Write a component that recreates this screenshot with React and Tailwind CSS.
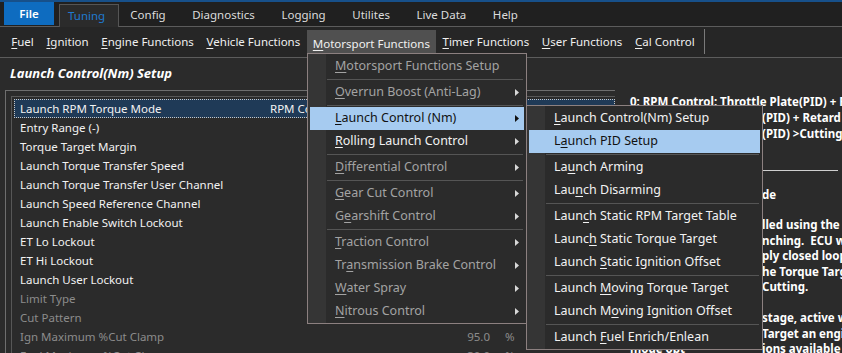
import React from 'react'

const tabs = ['Config', 'Diagnostics', 'Logging', 'Utilites', 'Live Data', 'Help']

const menus = [
  { t: 'Fuel', u: 0 },
  { t: 'Ignition', u: 0 },
  { t: 'Engine Functions', u: 0 },
  { t: 'Vehicle Functions', u: 0 },
  { t: 'Motorsport Functions', u: 0, open: true },
  { t: 'Timer Functions', u: 0 },
  { t: 'User Functions', u: 0 },
  { t: 'Cal Control', u: 0 },
]

const sportItems = [
  { t: 'Motorsport Functions Setup', u: 0, dim: true },
  'sep',
  { t: 'Overrun Boost (Anti-Lag)', u: 0, dim: true, arrow: true },
  'sep',
  { t: 'Launch Control (Nm)', u: 0, active: true, arrow: true },
  { t: 'Rolling Launch Control', u: 0, arrow: true },
  'sep',
  { t: 'Differential Control', u: 0, dim: true, arrow: true },
  'sep',
  { t: 'Gear Cut Control', u: 0, dim: true, arrow: true },
  { t: 'Gearshift Control', u: 1, dim: true, arrow: true },
  'sep',
  { t: 'Traction Control', u: 0, dim: true, arrow: true },
  { t: 'Transmission Brake Control', u: 2, dim: true, arrow: true },
  { t: 'Water Spray', u: 0, dim: true, arrow: true },
  { t: 'Nitrous Control', u: 0, dim: true, arrow: true },
]

const launchItems = [
  { t: 'Launch Control(Nm) Setup', u: 0 },
  { t: 'Launch PID Setup', u: 1, active: true },
  'sep',
  { t: 'Launch Arming', u: 2 },
  { t: 'Launch Disarming', u: 3 },
  'sep',
  { t: 'Launch Static RPM Target Table', u: 4 },
  { t: 'Launch Static Torque Target', u: 5 },
  { t: 'Launch Static Ignition Offset', u: 7 },
  'sep',
  { t: 'Launch Moving Torque Target', u: 7 },
  { t: 'Launch Moving Ignition Offset', u: 8 },
  'sep',
  { t: 'Launch Fuel Enrich/Enlean', u: 7 },
]

const rows = [
  { name: 'Launch RPM Torque Mode', value: 'RPM Control', selected: true },
  { name: 'Entry Range (-)' },
  { name: 'Torque Target Margin' },
  { name: 'Launch Torque Transfer Speed' },
  { name: 'Launch Torque Transfer User Channel' },
  { name: 'Launch Speed Reference Channel' },
  { name: 'Launch Enable Switch Lockout' },
  { name: 'ET Lo Lockout' },
  { name: 'ET Hi Lockout' },
  { name: 'Launch User Lockout' },
  { name: 'Limit Type', dim: true },
  { name: 'Cut Pattern', dim: true },
  { name: 'Ign Maximum %Cut Clamp', num: '95.0', unit: '%', dim: true },
  { name: 'Fuel Maximum %Cut Clamp', num: '30.0', unit: '%', dim: true },
]

// each line: [start, rest] - start sits under the open sub menu
const help = [
  ['1: RPM Control: Throttle', '(PID) + Retard'],
  ['2: Torque Control: Throttle', '(PID) >Cutting'],
]

const para = [
  ['Launch RPM is contro', 'lled using the selected mode'],
  ['during pre-lau', 'nching.  ECU will hold the RPM'],
  ['target and ap', 'ply closed loop control'],
  ['control to reach t', 'he Torque Target using'],
  ['Retard and ', 'Cutting.'],
  null,
  ['In the launch ', 'stage, active when the'],
  ['released, ', 'Target an engine torque'],
  ['mode opt', 'ions available in the'],
]

function Mn({ text, u }) {
  return (
    <>
      {text.slice(0, u)}
      <span className="underline underline-offset-[2px]">{text[u]}</span>
      {text.slice(u + 1)}
    </>
  )
}

function Arrow({ dark }) {
  return (
    <svg width="4" height="7" viewBox="0 0 4 7" className={dark ? 'fill-[#111]' : 'fill-[#d8d8d8]'}>
      <path d="M0 0 L4 3.5 L0 7 Z" />
    </svg>
  )
}

function PopupMenu({ items, className }) {
  return (
    <div
      className={`absolute border border-[#8c8080] bg-[linear-gradient(to_right,#353535_18px,#2b2b2b_18px)] pt-[1px] text-[12.5px] ${className}`}
    >
      {items.map((it, i) =>
        it === 'sep' ? (
          <div key={i} className="h-[3px] flex items-center pl-[19px] pr-[3px]">
            <div className="h-px flex-1 bg-[#555]" />
          </div>
        ) : (
          <div
            key={i}
            className={`h-[23px] mx-[2px] flex items-center justify-between pl-[25px] pr-[5px] whitespace-nowrap ${
              it.active ? 'bg-[#a6cbf0] text-[#111]' : it.dim ? 'text-[#a3a3a3]' : 'text-[#f2f2f2]'
            }`}
          >
            <span>
              <Mn text={it.t} u={it.u} />
            </span>
            {it.arrow && <Arrow dark={it.active} />}
          </div>
        )
      )}
    </div>
  )
}

function Line({ start, rest }) {
  return (
    <div className="flex whitespace-pre">
      <span className="w-[132px] shrink-0 overflow-hidden">{start}</span>
      <span>{rest}</span>
    </div>
  )
}

export default function App() {
  return (
    <div className="relative w-[842px] h-[353px] overflow-hidden bg-[#2b2b2b] text-[11.5px] text-[#f0f0f0] font-['Noto_Sans','Open_Sans',sans-serif]">
      <div className="h-[2px] bg-[#17508a]" />

      {/* ribbon tabs */}
      <div className="h-[25px] flex items-end bg-[#202020] border-b border-[#5c5c5c] pl-[4px]">
        <div className="w-[50px] h-[23px] mb-[1px] flex items-center justify-center bg-[#0e6cc0] text-white font-semibold">
          File
        </div>
        <div className="ml-[5px] w-[60px] h-[23px] -mb-px flex items-center pl-[8px] bg-[#2b2b2b] border border-b-0 border-[#555] text-[#1f7ad0]">
          Tuning
        </div>
        <div className="flex ml-[-2px] h-[23px] items-center text-[#dcdcdc]">
          {tabs.map((t) => (
            <div key={t} className="px-[13.3px]">
              {t}
            </div>
          ))}
        </div>
      </div>

      {/* menu bar */}
      <div className="h-[31px] flex items-start pl-[5px] bg-[#262626] border-b border-[#5c5c5c]">
        {menus.map((m) => (
          <div
            key={m.t}
            className={`mt-[3px] h-[24px] flex items-center px-[6.3px] whitespace-nowrap ${
              m.open ? 'bg-[#505050] h-[27px]' : ''
            }`}
          >
            <Mn text={m.t} u={m.u} />
          </div>
        ))}
        <div className="ml-[3px] mt-[2px] w-px h-[25px] bg-[#7a7a7a]" />
      </div>

      {/* title */}
      <div className="h-[32px] flex items-center pl-[10px] font-bold italic text-[13px] text-white">
        Launch Control(Nm) Setup
      </div>

      {/* content */}
      <div className="flex pl-[5px]">
        <div className="w-[610px] shrink-0 border-l border-t border-[#6e6e6e] pl-[5px] pt-[5px]">
          <div className="border-l border-t border-[#575757] pl-[2px] pt-[2px]">
            {rows.map((r) => (
              <div
                key={r.name}
                className={`h-[19px] flex items-center pl-[5px] whitespace-nowrap border border-dotted ${
                  r.selected ? 'bg-[#1f3a57] border-[#c8c8c8]' : 'border-transparent'
                } ${r.dim ? 'text-[#8c8c8c]' : 'text-[#f2f2f2]'}`}
              >
                <span className="w-[250px] shrink-0">{r.name}</span>
                {r.value && <span>{r.value}</span>}
                {r.num && (
                  <>
                    <span className="w-[220px] text-right">{r.num}</span>
                    <span className="pl-[15px]">{r.unit}</span>
                  </>
                )}
              </div>
            ))}
          </div>
        </div>

        <div className="pl-[15px] pt-[4px] font-bold text-white whitespace-nowrap leading-[16px]">
          <div>0: RPM Control: Throttle Plate(PID) + Retard(PID)</div>
          {help.map(([a, b]) => (
            <Line key={a} start={a} rest={b} />
          ))}
          <div className="mt-[28px] h-px w-[208px] bg-[#cfcfcf]" />
          <div className="mt-[16px]">
            <Line start="Launch RPM Torque Mo" rest="de" />
          </div>
          <div className="mt-[14px] leading-[15.5px]">
            {para.map((l, i) =>
              l ? <Line key={i} start={l[0]} rest={l[1]} /> : <div key={i} className="h-[15.5px]" />
            )}
          </div>
        </div>
      </div>

      <PopupMenu items={sportItems} className="left-[307px] top-[53px] w-[220px]" />
      <PopupMenu items={launchItems} className="left-[526px] top-[105px] w-[237px]" />
    </div>
  )
}
